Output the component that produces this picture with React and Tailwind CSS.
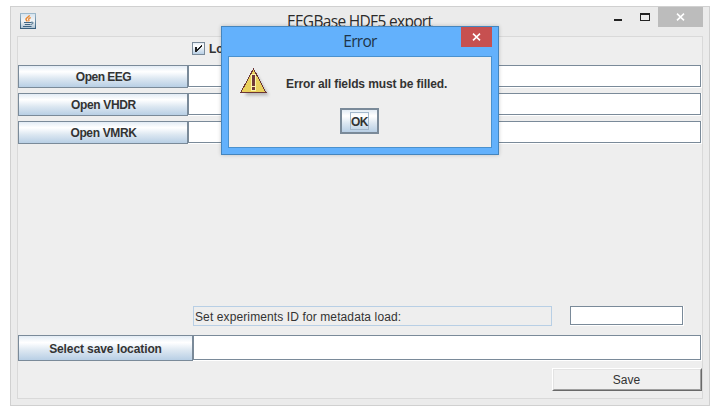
import React from "react";

const GRADIENT =
  "bg-[linear-gradient(to_bottom,#e3ecf5_0%,#ffffff_27%,#f6f9fc_36%,#dce7f1_60%,#b8cfe5_100%)]";

function MetalButton({ className, children }) {
  return (
    <button
      className={`flex shrink-0 items-center justify-center border border-[#7a8a99] text-[12px] font-bold leading-none text-[#333333] ${GRADIENT} ${className}`}
    >
      {children}
    </button>
  );
}

function MetalField({ className }) {
  return (
    <div className={`border-b border-r border-white bg-white ${className}`}>
      <div className="h-full w-full border border-[#7a8a99] bg-white" />
    </div>
  );
}

function FileRow({ label, tracking }) {
  return (
    <div className="flex h-[23px]">
      <MetalButton className={`w-[170px] ${tracking}`}>{label}</MetalButton>
      <MetalField className="flex-1" />
    </div>
  );
}

function JavaIcon() {
  return (
    <svg width="16" height="16" viewBox="0 0 16 16" className="block">
      <defs>
        <linearGradient id="cup" x1="0" y1="0" x2="0" y2="1">
          <stop offset="0" stopColor="#d5e3ee" />
          <stop offset="0.5" stopColor="#f4f6f7" />
          <stop offset="1" stopColor="#a9bfd0" />
        </linearGradient>
        <linearGradient id="edge" x1="0" y1="0" x2="0" y2="1">
          <stop offset="0" stopColor="#9eb9cb" />
          <stop offset="1" stopColor="#385f7d" />
        </linearGradient>
      </defs>
      <rect x="0.5" y="0.5" width="15" height="15" fill="url(#cup)" stroke="url(#edge)" />
      <path d="M9.4 2.2C9.4 4.2 5.4 4.6 6 6.6c.2.8 1 1.2 1.4 1.8" fill="none" stroke="#e8862e" strokeWidth="1.5" />
      <path d="M10.8 4.6C8.8 5.2 8.2 6 8.9 6.9c.4.5 0 1.1-.4 1.5" fill="none" stroke="#ef8a35" strokeWidth="1.3" />
      <path d="M4 9.5h7.2M4.8 11.5h5.4M3 13.5h8.5" stroke="#3f6583" strokeWidth="1" fill="none" />
      <path d="M11 9.3c3-.6 3 1.5-.4 2.2" stroke="#3f6583" strokeWidth="1" fill="none" />
    </svg>
  );
}

function CrossIcon() {
  return (
    <svg width="9" height="8" viewBox="0 0 9 8" className="block">
      <path d="M1 0.7L8 7.3M8 0.7L1 7.3" stroke="#ffffff" strokeWidth="1.6" />
    </svg>
  );
}

function WarningIcon() {
  return (
    <svg width="32" height="32" viewBox="0 0 32 32" className="block overflow-visible">
      <path d="M15 3L29 27.5H5Z" fill="#777777" opacity="0.45" className="blur-[1.5px]" />
      <g shapeRendering="crispEdges">
        <path d="M13.5 0.8L26 24.5H0.8Z" fill="#e9d05c" stroke="#6b3535" strokeWidth="1" />
        <rect x="11" y="6" width="5" height="17" fill="#fbf2a8" />
        <rect x="12" y="7" width="3" height="11" fill="#703838" />
        <rect x="12" y="19" width="3" height="3" fill="#703838" />
      </g>
    </svg>
  );
}

function TitleBar() {
  return (
    <div className="flex h-[29px] items-start">
      <div className="ml-[9px] mt-[6px] w-[16px]">
        <JavaIcon />
      </div>
      <div className="ml-[251px] mt-[4px] w-[150px] whitespace-nowrap font-['Open_Sans',sans-serif] text-[15.5px] leading-[21px] tracking-[-0.68px] text-[#2b2b2b]">
        EEGBase HDF5 export
      </div>
      <div className="ml-[177px] mt-[12px] h-[2px] w-[8px] bg-[#222222]" />
      <div className="ml-[18px] mt-[6px] h-[8px] w-[10px] border border-t-2 border-[#222222]" />
      <div className="ml-[8px] flex h-[20px] w-[45px] items-center justify-center bg-[#bcbcbc]">
        <CrossIcon />
      </div>
    </div>
  );
}

function ErrorDialog() {
  return (
    <div className="absolute left-[221px] top-[26px] flex h-[129px] w-[278px] flex-col border border-[#4585bd] bg-[#63b1fc] px-[6px] pb-[6px] shadow-[0_0_4px_rgba(0,0,0,0.2)]">
      <div className="flex h-[29px] items-start">
        <div className="w-[31px]" />
        <div className="mt-[4px] flex-1 text-center font-['Open_Sans',sans-serif] text-[15.5px] leading-[21px] tracking-[-0.7px] text-[#1e3448]">
          Error
        </div>
        <button className="flex h-[20px] w-[31px] items-center justify-center bg-[#c75050]">
          <CrossIcon />
        </button>
      </div>
      <div className="flex-1 border border-[#4a91ce] bg-[#eeeeee]">
        <div className="flex h-[51px] items-start">
          <div className="ml-[11px] mt-[11px] w-[32px]">
            <WarningIcon />
          </div>
          <div className="ml-[14px] mt-[20px] whitespace-nowrap text-[12px] font-bold leading-[14px] tracking-[-0.11px] text-[#333333]">
            Error all fields must be filled.
          </div>
        </div>
        <button
          className={`ml-[111px] flex h-[26px] w-[39px] items-center justify-center border-2 border-[#7a8a99] ${GRADIENT}`}
        >
          <span className="flex h-[18px] w-[19px] items-center justify-center border border-[#a3b8cc] pt-px text-[12px] font-bold leading-none tracking-[-0.5px] text-[#333333]">
            OK
          </span>
        </button>
      </div>
    </div>
  );
}

export default function App() {
  return (
    <div className="relative h-[420px] w-[720px] overflow-hidden bg-white pl-[10px] pt-[6px] font-['Liberation_Sans',Arial,sans-serif]">
      <div className="h-[400px] w-[700px] border border-[#d0d0d0] bg-[#ebebeb]">
        <TitleBar />
        <div className="ml-[6px] flex h-[363px] w-[686px] flex-col border border-[#d9d9d9] bg-[#eeeeee]">
          <div className="flex h-[28px] items-start pl-[174px] pt-[5px]">
            <div className={`h-[13px] w-[13px] border border-[#7a8a99] ${GRADIENT}`}>
              <svg width="11" height="11" viewBox="0 0 11 11" className="block" shapeRendering="crispEdges">
                <path d="M2 4h2v2h1V5h1V4h1V3h1V2h1v2H8v1H7v1H6v1H5v1H4v1H2Z" fill="#222222" />
              </svg>
            </div>
            <span className="ml-[4px] text-[12px] font-bold leading-[14px] text-[#333333]">Load</span>
          </div>
          <div className="flex flex-col gap-[5px]">
            <FileRow label="Open EEG" tracking="pl-px tracking-[-0.5px]" />
            <FileRow label="Open VHDR" tracking="pl-px tracking-[-0.35px]" />
            <FileRow label="Open VMRK" tracking="pl-px tracking-[-0.35px]" />
          </div>
          <div className="mt-[162px] flex h-[20px] pl-[175px]">
            <div className="w-[359px] border border-[#b8cfe5] pl-px pt-px text-[12px] leading-[19px] tracking-[0.11px] text-[#333333]">
              Set experiments ID for metadata load:
            </div>
            <MetalField className="ml-[18px] w-[114px]" />
          </div>
          <div className="mt-[9px] flex h-[26px]">
            <MetalButton className="w-[175px] pt-[2px] tracking-[-0.1px]">Select save location</MetalButton>
            <MetalField className="flex-1" />
          </div>
          <button className="ml-auto mt-[7px] h-[23px] w-[150px] border border-b-[#696969] border-l-white border-r-[#696969] border-t-white bg-[#f0f0f0]">
            <span className="flex h-full items-center justify-center border border-b-[#a0a0a0] border-l-[#e3e3e3] border-r-[#a0a0a0] border-t-[#e3e3e3] pr-px text-[12px] leading-none text-[#333333]">
              Save
            </span>
          </button>
        </div>
      </div>
      <ErrorDialog />
    </div>
  );
}
